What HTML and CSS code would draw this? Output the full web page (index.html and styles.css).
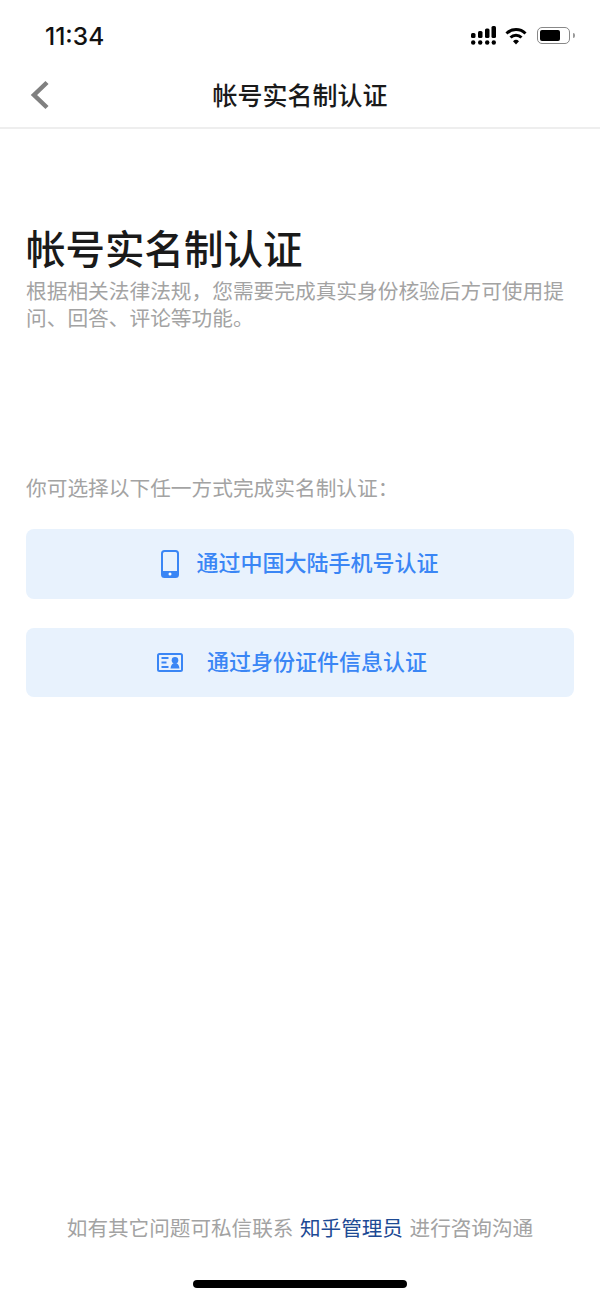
FILE: index.html
```html
<!DOCTYPE html>
<html lang="zh-CN">
<head>
  <meta charset="UTF-8">
  <title>帐号实名制认证</title>
  <link rel="stylesheet" href="styles.css">
</head>
<body>

  <div class="status-bar">
    <span class="time">11:34</span>
    <div class="status-icons">
      <svg width="25" height="19" viewBox="0 0 25 19" fill="#000">
        <rect x="0" y="7" width="4.5" height="5" rx="1.5"/>
        <rect x="7" y="5" width="4.5" height="7" rx="1.5"/>
        <rect x="14" y="2.500" width="4.500" height="9.500" rx="1.500"/>
        <rect x="20.500" y="0" width="4.500" height="12" rx="1.500"/>
        <circle cx="2.200" cy="16.500" r="2.200"/>
        <circle cx="9.200" cy="16.500" r="2.200"/>
        <circle cx="16.200" cy="16.500" r="2.200"/>
        <circle cx="22.800" cy="16.500" r="2.200"/>
      </svg>
      <svg class="wifi" width="22" height="18" viewBox="0 0 22 18" fill="none" stroke="#000" stroke-width="3">
        <path d="M1.500 6.500a13.500 13.500 0 0 1 19 0"/>
        <path d="M5.500 10.500a8 8 0 0 1 11 0"/>
        <path d="M11 17.500l-3-3.200a4.300 4.300 0 0 1 6 0z" fill="#000" stroke="none"/>
      </svg>
      <div class="battery"><div class="battery-level"></div></div>
      <div class="battery-cap"></div>
    </div>
  </div>

  <div class="nav-bar">
    <svg class="back" width="20" height="30" viewBox="0 0 20 30" fill="none" stroke="#808080" stroke-width="4.500">
      <path d="M17 2.500L4 15l13 12.500"/>
    </svg>
    <span class="nav-title">帐号实名制认证</span>
  </div>

  <div class="content">
    <h1>帐号实名制认证</h1>
    <p class="desc">根据相关法律法规，您需要完成真实身份核验后方可使用提问、回答、评论等功能。</p>

    <p class="choose">你可选择以下任一方式完成实名制认证：</p>

    <a href="#" class="option option-phone">
      <svg width="18" height="28" viewBox="0 0 18 28">
        <rect x="1" y="1" width="16" height="26" rx="2.500" fill="none" stroke="#3a86f5" stroke-width="2"/>
        <path d="M1 21h16v3.500a2.500 2.500 0 0 1-2.500 2.500h-11A2.500 2.500 0 0 1 1 24.500z" fill="#3a86f5"/>
        <circle cx="9" cy="24" r="1.500" fill="#fff"/>
      </svg>
      <span>通过中国大陆手机号认证</span>
    </a>

    <a href="#" class="option option-id">
      <svg width="26" height="19" viewBox="0 0 26 19">
        <rect x="1" y="1" width="24" height="17" rx="1.500" fill="none" stroke="#3a86f5" stroke-width="2"/>
        <path d="M4.500 5h7M4.500 9.500h5M4.500 14h7" stroke="#3a86f5" stroke-width="1.800"/>
        <circle cx="18" cy="7.200" r="3.300" fill="#3a86f5"/>
        <path d="M13.500 15.500c.2-3.500 2-5.500 4.500-5.500s4.300 2 4.500 5.500z" fill="#3a86f5"/>
      </svg>
      <span>通过身份证件信息认证</span>
    </a>
  </div>

  <div class="footer">
    <p>如有其它问题可私信联系 <a href="#">知乎管理员</a> 进行咨询沟通</p>
    <div class="home-bar"></div>
  </div>

</body>
</html>
```

FILE: styles.css
```css
html, body {
  margin: 0;
  height: 100%;
}
body {
  display: flex;
  flex-direction: column;
  height: 1299px;
  overflow: hidden;
  background: #fff;
  font-family: "Noto Sans CJK SC", "Liberation Sans", sans-serif;
  color: #1a1a1a;
}
.status-bar {
  display: flex;
  align-items: center;
  justify-content: space-between;
  height: 71px;
  padding: 0 25px 0 45px;
  flex-shrink: 0;
}
.time {
  font-family: Inter, "Liberation Sans", sans-serif;
  font-size: 24.500px;
  font-weight: 500;
  color: #111;
}
.status-icons {
  display: flex;
  align-items: center;
}
.wifi {
  margin-left: 9px;
}
.battery {
  width: 33px;
  height: 17px;
  margin-left: 10px;
  padding: 2px;
  box-sizing: border-box;
  border: 1px solid #888;
  border-radius: 5px;
}
.battery-level {
  width: 20px;
  height: 100%;
  background: #000;
  border-radius: 2px;
}
.battery-cap {
  width: 2px;
  height: 5px;
  margin-left: 3px;
  background: #999;
  border-radius: 0 2px 2px 0;
}
.nav-bar {
  position: relative;
  display: flex;
  align-items: center;
  justify-content: center;
  box-sizing: border-box;
  height: 58px;
  padding-bottom: 10px;
  border-bottom: 2px solid #eee;
  flex-shrink: 0;
}
.back {
  position: absolute;
  left: 30px;
  top: 9px;
}
.nav-title {
  font-size: 25px;
  font-weight: 500;
  color: #1a1a1a;
}
.content {
  flex: 1;
  padding: 0 26px;
}
h1 {
  margin: 90px 0 0;
  font-size: 39.500px;
  font-weight: 500;
  line-height: 56px;
  color: #1a1a1a;
}
.desc {
  margin: 2px 0 0;
  font-size: 20.700px;
  line-height: 27px;
  color: #a3a3a3;
}
.choose {
  margin: 142px 0 0;
  font-size: 20.700px;
  line-height: 28px;
  color: #a3a3a3;
}
.option {
  display: flex;
  align-items: center;
  justify-content: center;
  height: 69px;
  margin-bottom: 30px;
  background: #e8f2fd;
  border-radius: 8px;
  color: #3a86f5;
  font-size: 22px;
  font-weight: 500;
  text-decoration: none;
}
.option span {
  padding-bottom: 6px;
}
.option-phone {
  height: 70px;
  margin-top: 28px;
  margin-bottom: 29px;
  gap: 17px;
}
.option-id {
  gap: 24px;
  padding-right: 16px;
}
.footer {
  display: flex;
  flex-direction: column;
  align-items: center;
  flex-shrink: 0;
}
.footer p {
  margin: 0 0 39px;
  font-size: 20.600px;
  line-height: 28px;
  word-spacing: 2px;
  color: #a3a3a3;
}
.footer a {
  color: #1d4a94;
  text-decoration: none;
}
.home-bar {
  width: 214px;
  height: 8px;
  margin-bottom: 11px;
  background: #000;
  border-radius: 4px;
}
```
